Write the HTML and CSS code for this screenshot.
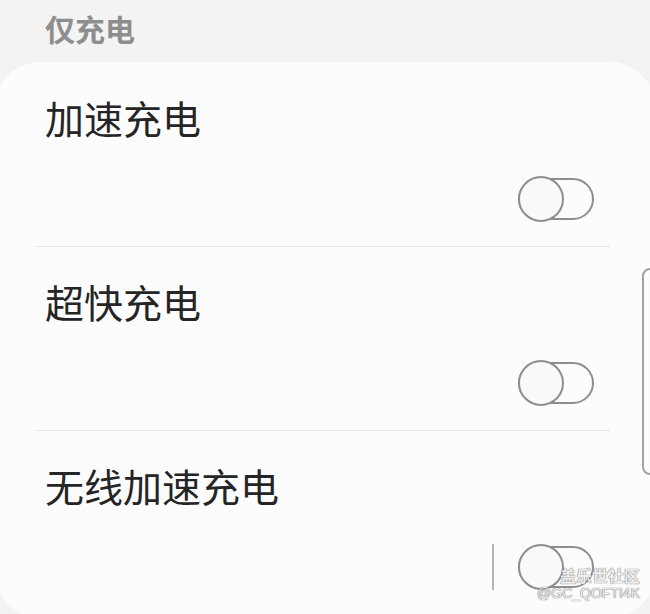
FILE: index.html
```html
<!DOCTYPE html>
<html lang="zh-CN">
<head>
    <meta charset="UTF-8">
    <meta name="viewport" content="width=device-width, initial-scale=1.0">
    <title>仅充电</title>
    <link rel="stylesheet" href="styles.css">
</head>
<body>
    <div class="header">仅充电</div>
    <div class="card">
        <div class="row">
            <p class="title">加速充电</p>
            <div class="controls">
                <span class="switch"><span class="thumb"></span></span>
            </div>
        </div>
        <div class="divider"></div>
        <div class="row">
            <p class="title">超快充电</p>
            <div class="controls">
                <span class="switch"><span class="thumb"></span></span>
            </div>
        </div>
        <div class="divider"></div>
        <div class="row">
            <p class="title">无线加速充电</p>
            <div class="controls">
                <span class="vline"></span>
                <span class="switch"><span class="thumb"></span></span>
            </div>
        </div>
    </div>
    <div class="scrollbar"></div>
    <div class="watermark">
        <span class="wm-name">盖乐世社区</span>
        <span class="wm-id">@GC_QOFTI4K</span>
    </div>
</body>
</html>
```
FILE: styles.css
```css
*{
    box-sizing: border-box;
    margin: 0;
    padding: 0;
}
html, body{
    height: 100%;
    overflow: hidden;
}
body{
    background-color: #f3f3f3;
    font-family: "Noto Sans CJK SC", "Noto Sans", sans-serif;
    position: relative;
}
.header{
    height: 62px;
    padding: 13px 0 0 45px;
    font-size: 30px;
    line-height: 30px;
    font-weight: 700;
    color: #8e8e8e;
}
.card{
    margin: 0 -5px;
    height: 556px;
    background-color: #fcfcfc;
    border-radius: 45px;
}
.row{
    height: 184px;
    padding: 36px 61px 0 50px;
}
.title{
    font-size: 39px;
    line-height: 39px;
    color: #252525;
}
.controls{
    margin-top: 39px;
    height: 46px;
    display: flex;
    justify-content: flex-end;
    align-items: center;
    gap: 24px;
}
.switch{
    position: relative;
    width: 76px;
    height: 42px;
    border: 2px solid #8e8e8e;
    border-radius: 21px;
}
.thumb{
    position: absolute;
    left: -2px;
    top: -4px;
    width: 46px;
    height: 46px;
    border: 2px solid #8e8e8e;
    border-radius: 50%;
    background-color: #fafafa;
}
.vline{
    width: 2px;
    height: 46px;
    background-color: #b4b4b4;
}
.divider{
    height: 1px;
    margin: 0 45px -1px 41px;
    background-color: #e6e6e6;
}
.scrollbar{
    position: absolute;
    left: 642px;
    top: 268px;
    width: 16px;
    height: 207px;
    border: 2px solid #a2a2a2;
    border-radius: 8px;
}
.watermark{
    position: absolute;
    right: 10px;
    bottom: 13px;
    display: flex;
    flex-direction: column;
    align-items: flex-end;
    color: #eeeeee;
    text-shadow: 0 0 1px #6f6f6f, 0 0 1px #6f6f6f;
}
.wm-name{
    font-size: 16px;
    line-height: 20px;
    font-weight: 700;
}
.wm-id{
    font-family: "Liberation Sans", sans-serif;
    font-size: 14px;
    line-height: 16px;
}
```
